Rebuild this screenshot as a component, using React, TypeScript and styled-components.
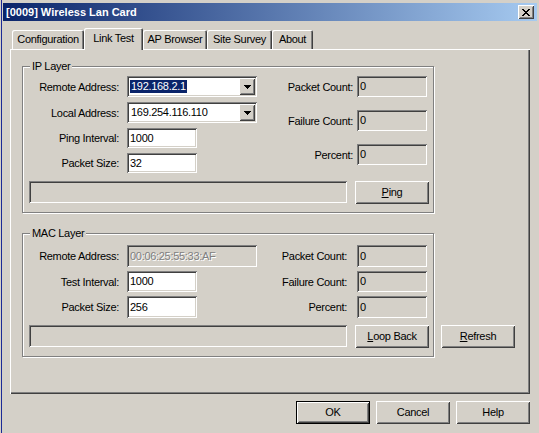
import React from "react";
import styled, { createGlobalStyle, css } from "styled-components";

const FACE = "#d4d0c8";

const GlobalStyle = createGlobalStyle`
  html, body { margin: 0; padding: 0; background: ${FACE}; }
  body {
    font-family: "Liberation Sans", Arial, sans-serif;
    font-size: 11px;
    letter-spacing: -0.3px;
    color: #000;
  }
  * { box-sizing: border-box; }
`;

const raisedEdge = css`
  box-shadow: inset 1px 1px 0 #fff, inset -1px -1px 0 #404040,
    inset 2px 2px 0 ${FACE}, inset -2px -2px 0 #808080;
`;

const sunkenEdge = css`
  box-shadow: inset 1px 1px 0 #808080, inset -1px -1px 0 #fff,
    inset 2px 2px 0 #404040, inset -2px -2px 0 ${FACE};
`;

const Window = styled.div`
  width: 538px;
  height: 433px;
  margin-left: 1px;
  border-left: 1px solid #1b2a96;
  padding: 3px 2px 0 1px;
  background: ${FACE};
  display: flex;
  flex-direction: column;
`;

const TitleBar = styled.div`
  height: 18px;
  display: flex;
  align-items: center;
  justify-content: space-between;
  padding: 0 3px 0 3px;
  background: linear-gradient(to right, #0a246a, #a6caf0);
`;

const TitleText = styled.span`
  color: #fff;
  font-weight: bold;
  font-size: 11px;
  letter-spacing: 0;
  white-space: nowrap;
`;

const CloseButton = styled.div`
  width: 16px;
  height: 14px;
  background: ${FACE};
  ${raisedEdge};
  display: flex;
  align-items: center;
  justify-content: center;
  padding-right: 1px;
`;

const Body = styled.div`
  padding: 7px 7px 0 7px;
  display: flex;
  flex-direction: column;
`;

const TabStrip = styled.div`
  height: 21px;
  display: flex;
  align-items: flex-start;
  padding-left: 2px;
`;

const Tab = styled.div<{ $w: number; $active?: boolean }>`
  position: relative;
  z-index: ${(p) => (p.$active ? 2 : 1)};
  width: ${(p) => p.$w}px;
  height: ${(p) => (p.$active ? 22 : 19)}px;
  margin-top: ${(p) => (p.$active ? 0 : 2)}px;
  padding-bottom: ${(p) => (p.$active ? 3 : 1)}px;
  background: ${FACE};
  border-top-left-radius: 2px;
  border-top-right-radius: 2px;
  box-shadow: inset 1px 1px 0 #fff, inset -1px 0 0 #404040,
    inset -2px 0 0 #808080;
  display: flex;
  align-items: center;
  justify-content: center;
  white-space: nowrap;
`;

const Panel = styled.div`
  width: 520px;
  height: 345px;
  background: ${FACE};
  box-shadow: inset 1px 1px 0 #fff, inset -1px -1px 0 #404040,
    inset -2px -2px 0 #808080;
  padding: 11px 0 0 12px;
  display: flex;
  flex-direction: column;
`;

const Group = styled.fieldset<{ $mt?: number }>`
  width: 412px;
  margin: ${(p) => p.$mt ?? 0}px 0 0 0;
  padding: 0;
  min-inline-size: 0;
  border: 1px solid #808080;
  box-shadow: inset 1px 1px 0 #fff, 1px 1px 0 #fff;
`;

const Legend = styled.legend`
  margin-left: 7px;
  padding: 0 2px;
  line-height: 13px;
  background: ${FACE};
`;

const GroupBody = styled.div<{ $pt: number }>`
  padding: ${(p) => p.$pt}px 0 8px 0;
  display: flex;
  flex-direction: column;
`;

const Columns = styled.div`
  display: flex;
  align-items: flex-start;
`;

const FieldGrid = styled.div<{
  $cols: string;
  $rows?: string;
  $gap: number;
  $mt?: number;
  $ml?: number;
}>`
  display: grid;
  grid-template-columns: ${(p) => p.$cols};
  grid-template-rows: ${(p) => p.$rows ?? "none"};
  grid-auto-rows: 21px;
  row-gap: ${(p) => p.$gap}px;
  margin-top: ${(p) => p.$mt ?? 0}px;
  margin-left: ${(p) => p.$ml ?? 0}px;
`;

const Label = styled.span<{ $pad?: number }>`
  display: flex;
  align-items: center;
  justify-content: flex-end;
  padding-right: ${(p) => p.$pad ?? 8}px;
  white-space: nowrap;
`;

const Edit = styled.div<{ $bg?: string; $disabled?: boolean; $w?: number }>`
  height: 100%;
  width: ${(p) => (p.$w ? `${p.$w}px` : "100%")};
  background: ${(p) => p.$bg ?? "#fff"};
  ${sunkenEdge};
  display: flex;
  align-items: center;
  padding: 0 3px 1px 3px;
  white-space: nowrap;
  overflow: hidden;
  color: ${(p) => (p.$disabled ? "#808080" : "#000")};
  text-shadow: ${(p) => (p.$disabled ? "1px 1px 0 #fff" : "none")};
`;

const ComboBox = styled.div`
  height: 21px;
  background: #fff;
  ${sunkenEdge};
  display: flex;
  align-items: stretch;
  padding: 2px;
`;

const ComboText = styled.div`
  flex: 1;
  display: flex;
  align-items: center;
  padding-left: 1px;
  white-space: nowrap;
`;

const Highlight = styled.span<{ $on?: boolean }>`
  background: ${(p) => (p.$on ? "#0a246a" : "transparent")};
  color: ${(p) => (p.$on ? "#fff" : "#000")};
  padding: 0 1px;
  line-height: 13px;
`;

const ComboButton = styled.div`
  width: 16px;
  background: ${FACE};
  ${raisedEdge};
  display: flex;
  align-items: center;
  justify-content: center;
`;

const ActionRow = styled.div<{ $mt: number }>`
  display: flex;
  align-items: flex-start;
  gap: 8px;
  margin: ${(p) => p.$mt}px 0 0 6px;
`;

const StatusBox = styled.div`
  width: 318px;
  height: 22px;
  background: ${FACE};
  ${sunkenEdge};
`;

const Button = styled.div<{ $w?: number; $default?: boolean; $mb?: number }>`
  width: ${(p) => p.$w ?? 74}px;
  height: 23px;
  margin-bottom: ${(p) => p.$mb ?? 0}px;
  background: ${FACE};
  border: ${(p) => (p.$default ? "1px solid #000" : "none")};
  ${raisedEdge};
  display: flex;
  align-items: center;
  justify-content: center;
  padding-bottom: 1px;
  white-space: nowrap;
  u { text-decoration: underline; text-underline-offset: 1px; }
`;

const MacRow = styled.div`
  display: flex;
  align-items: flex-end;
  gap: 7px;
`;

const Footer = styled.div`
  display: flex;
  justify-content: flex-end;
  gap: 6px;
  margin-top: 7px;
`;

const CloseGlyph = () => (
  <svg width="8" height="7" viewBox="0 0 8 7" shapeRendering="crispEdges">
    <path
      fill="#000"
      d="M0 0h2v1H0z M6 0h2v1H6z M1 1h2v1H1z M5 1h2v1H5z M2 2h4v1H2z M3 3h2v1H3z M2 4h4v1H2z M1 5h2v1H1z M5 5h2v1H5z M0 6h2v1H0z M6 6h2v1H6z"
    />
  </svg>
);

const DownArrow = () => (
  <svg width="7" height="4" viewBox="0 0 7 4" shapeRendering="crispEdges">
    <path fill="#000" d="M0 0h7v1H0z M1 1h5v1H1z M2 2h3v1H2z M3 3h1v1H3z" />
  </svg>
);

const Combo = ({ value, selected }: { value: string; selected?: boolean }) => (
  <ComboBox>
    <ComboText>
      <Highlight $on={selected}>{value}</Highlight>
    </ComboText>
    <ComboButton>
      <DownArrow />
    </ComboButton>
  </ComboBox>
);

const tabs = [
  { label: "Configuration", w: 72 },
  { label: "Link Test", w: 59, active: true },
  { label: "AP Browser", w: 64 },
  { label: "Site Survey", w: 65 },
  { label: "About", w: 41 },
];

export default function App() {
  return (
    <>
      <GlobalStyle />
      <Window>
        <TitleBar>
          <TitleText>[0009] Wireless Lan Card</TitleText>
          <CloseButton aria-label="Close">
            <CloseGlyph />
          </CloseButton>
        </TitleBar>
        <Body>
          <TabStrip>
            {tabs.map((t) => (
              <Tab key={t.label} $w={t.w} $active={t.active}>
                {t.label}
              </Tab>
            ))}
          </TabStrip>
          <Panel>
            <Group>
              <Legend>IP Layer</Legend>
              <GroupBody $pt={3}>
                <Columns>
                  <FieldGrid
                    $cols="104px 130px"
                    $rows="21px 21px 20px 20px"
                    $gap={5}
                    $mt={0}
                  >
                    <Label>Remote Address:</Label>
                    <Combo value="192.168.2.1" selected />
                    <Label>Local Address:</Label>
                    <Combo value="169.254.116.110" />
                    <Label>Ping Interval:</Label>
                    <Edit $w={70}>1000</Edit>
                    <Label>Packet Size:</Label>
                    <Edit $w={70}>32</Edit>
                  </FieldGrid>
                  <FieldGrid $cols="84px 70px" $gap={13} $ml={16}>
                    <Label $pad={4}>Packet Count:</Label>
                    <Edit $bg={FACE}>0</Edit>
                    <Label $pad={4}>Failure Count:</Label>
                    <Edit $bg={FACE}>0</Edit>
                    <Label $pad={4}>Percent:</Label>
                    <Edit $bg={FACE}>0</Edit>
                  </FieldGrid>
                </Columns>
                <ActionRow $mt={8}>
                  <StatusBox />
                  <Button>
                    <u>P</u>ing
                  </Button>
                </ActionRow>
              </GroupBody>
            </Group>
            <MacRow>
              <Group $mt={14}>
                <Legend>MAC Layer</Legend>
                <GroupBody $pt={5}>
                  <FieldGrid
                    $cols="104px 130px 100px 70px"
                    $rows="22px 21px 22px"
                    $gap={4}
                  >
                    <Label>Remote Address:</Label>
                    <Edit $bg={FACE} $disabled>
                      00:06:25:55:33:AF
                    </Edit>
                    <Label $pad={10}>Packet Count:</Label>
                    <Edit $bg={FACE}>0</Edit>
                    <Label>Test Interval:</Label>
                    <Edit $w={70}>1000</Edit>
                    <Label $pad={10}>Failure Count:</Label>
                    <Edit $bg={FACE}>0</Edit>
                    <Label>Packet Size:</Label>
                    <Edit $w={70}>256</Edit>
                    <Label $pad={10}>Percent:</Label>
                    <Edit $bg={FACE}>0</Edit>
                  </FieldGrid>
                  <ActionRow $mt={7}>
                    <StatusBox />
                    <Button>
                      <u>L</u>oop Back
                    </Button>
                  </ActionRow>
                </GroupBody>
              </Group>
              <Button $mb={9}>
                <u>R</u>efresh
              </Button>
            </MacRow>
          </Panel>
          <Footer>
            <Button $default>OK</Button>
            <Button>Cancel</Button>
            <Button>Help</Button>
          </Footer>
        </Body>
      </Window>
    </>
  );
}
